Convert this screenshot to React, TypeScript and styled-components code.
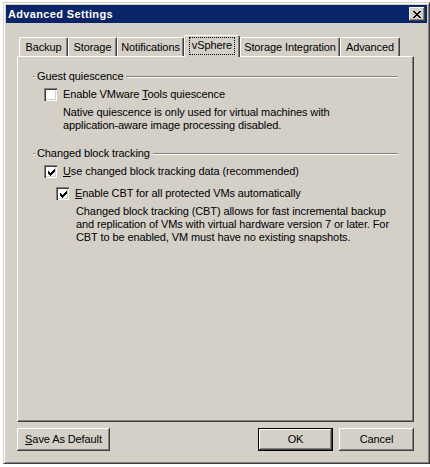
import React from 'react'
import styled, { createGlobalStyle } from 'styled-components'

const GlobalStyle = createGlobalStyle`
  html, body {
    margin: 0;
    padding: 0;
    background: #ffffff;
  }
  body {
    font-family: Tahoma, "Liberation Sans", Arial, sans-serif;
    font-size: 11px;
    letter-spacing: -0.1px;
    color: #000;
  }
`

const Page = styled.div`
  width: 430px;
  height: 467px;
  padding: 2px 0 0 3px;
  box-sizing: border-box;
  overflow: hidden;
`

const Window = styled.div`
  width: 427px;
  height: 462px;
  box-sizing: border-box;
  background: #d4d0c8;
  border: 1px solid;
  border-color: #d4d0c8 #404040 #404040 #d4d0c8;
  box-shadow: inset 1px 1px #ffffff, inset -1px -1px #808080;
  padding: 2px;
  display: flex;
  flex-direction: column;
`

const TitleBar = styled.div`
  height: 18px;
  background: #0a246a;
  display: flex;
  align-items: center;
  justify-content: space-between;
  padding: 0 2px 0 2px;
`

const TitleText = styled.span`
  color: #ffffff;
  font-weight: bold;
  font-size: 11px;
  letter-spacing: 0.35px;
`

const CloseButton = styled.div`
  width: 16px;
  height: 14px;
  box-sizing: border-box;
  background: #d4d0c8;
  box-shadow: inset -1px -1px #404040, inset 1px 1px #ffffff, inset -2px -2px #808080;
  display: flex;
  align-items: center;
  justify-content: center;
`

const Body = styled.div`
  padding: 12px 0 0 11px;
  display: flex;
  flex-direction: column;
`

const TabRow = styled.div`
  height: 21px;
  display: flex;
  align-items: flex-end;
  padding-left: 2px;
  position: relative;
  z-index: 1;
`

const Tab = styled.div<{ $w: number; $active?: boolean }>`
  width: ${p => p.$w}px;
  height: ${p => (p.$active ? 22 : 19)}px;
  margin-bottom: ${p => (p.$active ? -1 : 0)}px;
  box-sizing: border-box;
  background: #d4d0c8;
  border-top: 1px solid #ffffff;
  border-left: 1px solid #ffffff;
  border-right: 1px solid #404040;
  border-top-left-radius: 2px;
  border-top-right-radius: 2px;
  box-shadow: inset -1px 0 #808080;
  display: flex;
  align-items: center;
  justify-content: center;
  padding: ${p => (p.$active ? '0 2px 2px' : '0 0 1px')};
  white-space: nowrap;
`

const FocusRect = styled.span`
  border: 1px dotted #000;
  padding: 2px 2px 3px;
  line-height: 11px;
`

const Panel = styled.div`
  width: 397px;
  height: 366px;
  box-sizing: border-box;
  border-top: 1px solid #ffffff;
  border-left: 1px solid #ffffff;
  border-right: 1px solid #404040;
  border-bottom: 1px solid #404040;
  box-shadow: inset -1px -1px #808080;
  padding: 13px 15px 0 15px;
  display: flex;
  flex-direction: column;
  gap: 15px;
`

const Group = styled.div`
  display: flex;
  flex-direction: column;
`

const GroupHeader = styled.div`
  height: 13px;
  display: flex;
  align-items: center;
  line-height: 13px;

  &::before,
  &::after {
    content: '';
    height: 0;
    border-top: 1px solid #808080;
    border-bottom: 1px solid #ffffff;
  }
  &::before {
    width: 2px;
  }
  &::after {
    flex: 1;
  }
`

const GroupLabel = styled.span`
  padding: 0 3px 0 2px;
`

const CheckRow = styled.div<{ $indent: number; $top: number }>`
  display: flex;
  align-items: center;
  gap: 6px;
  height: 13px;
  line-height: 13px;
  margin: ${p => p.$top}px 0 0 ${p => p.$indent}px;
`

const Box = styled.span`
  width: 13px;
  height: 13px;
  box-sizing: border-box;
  background: #ffffff;
  box-shadow: inset 1px 1px #808080, inset 2px 2px #404040, inset -1px -1px #ffffff,
    inset -2px -2px #d4d0c8;
  display: flex;
  align-items: center;
  justify-content: center;
  padding: 1px 0 0 1px;
  flex-shrink: 0;
`

const Desc = styled.div<{ $indent: number }>`
  margin: 5px 0 0 ${p => p.$indent}px;
  line-height: 13px;
`

const ButtonRow = styled.div`
  width: 397px;
  margin-top: 6px;
  display: flex;
  align-items: center;
  gap: 6px;
`

const Button = styled.div<{ $w: number; $default?: boolean }>`
  width: ${p => p.$w}px;
  height: 23px;
  box-sizing: border-box;
  background: #d4d0c8;
  border: ${p => (p.$default ? '1px solid #000' : 'none')};
  box-shadow: inset -1px -1px #404040, inset 1px 1px #ffffff, inset -2px -2px #808080;
  display: flex;
  align-items: center;
  justify-content: center;
  padding-bottom: 1px;
`

const Spacer = styled.div`
  flex: 1;
`

// classic 7x7 check glyph, row by row
const checkPixels: [number, number, number][] = [
  [6, 0, 1],
  [5, 1, 2],
  [0, 2, 1],
  [4, 2, 3],
  [0, 3, 2],
  [3, 3, 3],
  [0, 4, 5],
  [1, 5, 3],
  [2, 6, 1],
]

function Check({ checked }: { checked?: boolean }) {
  return (
    <Box>
      {checked && (
        <svg width="7" height="7" viewBox="0 0 7 7" shapeRendering="crispEdges">
          {checkPixels.map(([x, y, w]) => (
            <rect key={`${x}-${y}`} x={x} y={y} width={w} height={1} fill="#000" />
          ))}
        </svg>
      )}
    </Box>
  )
}

const tabs = [
  { label: 'Backup', w: 49 },
  { label: 'Storage', w: 49 },
  { label: 'Notifications', w: 67 },
  { label: 'vSphere', w: 56, active: true },
  { label: 'Storage Integration', w: 100 },
  { label: 'Advanced', w: 60 },
]

export default function App() {
  return (
    <Page>
      <GlobalStyle />
      <Window>
        <TitleBar>
          <TitleText>Advanced Settings</TitleText>
          <CloseButton>
            <svg width="8" height="7" viewBox="0 0 8 7" shapeRendering="crispEdges">
              <path
                d="M0 0h2v1h1v1h2v-1h1v-1h2v1h-1v1h-1v1h-1v1h1v1h1v1h1v1h-2v-1h-1v-1h-2v1h-1v1h-2v-1h1v-1h1v-1h1v-1h-1v-1h-1v-1h-1z"
                fill="#000"
              />
            </svg>
          </CloseButton>
        </TitleBar>
        <Body>
          <TabRow>
            {tabs.map(t => (
              <Tab key={t.label} $w={t.w} $active={t.active}>
                {t.active ? <FocusRect>{t.label}</FocusRect> : t.label}
              </Tab>
            ))}
          </TabRow>
          <Panel>
            <Group>
              <GroupHeader>
                <GroupLabel>Guest quiescence</GroupLabel>
              </GroupHeader>
              <CheckRow $indent={11} $top={5}>
                <Check />
                <span>
                  Enable VMware <u>T</u>ools quiescence
                </span>
              </CheckRow>
              <Desc $indent={30}>
                Native quiescence is only used for virtual machines with
                <br />
                application-aware image processing disabled.
              </Desc>
            </Group>
            <Group>
              <GroupHeader>
                <GroupLabel>Changed block tracking</GroupLabel>
              </GroupHeader>
              <CheckRow $indent={11} $top={5}>
                <Check checked />
                <span>
                  <u>U</u>se changed block tracking data (recommended)
                </span>
              </CheckRow>
              <CheckRow $indent={23} $top={9}>
                <Check checked />
                <span>
                  <u>E</u>nable CBT for all protected VMs automatically
                </span>
              </CheckRow>
              <Desc $indent={43}>
                Changed block tracking (CBT) allows for fast incremental backup
                <br />
                and replication of VMs with virtual hardware version 7 or later. For
                <br />
                CBT to be enabled, VM must have no existing snapshots.
              </Desc>
            </Group>
          </Panel>
          <ButtonRow>
            <Button $w={93}>
              <span>
                <u>S</u>ave As Default
              </span>
            </Button>
            <Spacer />
            <Button $w={75} $default>
              OK
            </Button>
            <Button $w={75}>Cancel</Button>
          </ButtonRow>
        </Body>
      </Window>
    </Page>
  )
}
